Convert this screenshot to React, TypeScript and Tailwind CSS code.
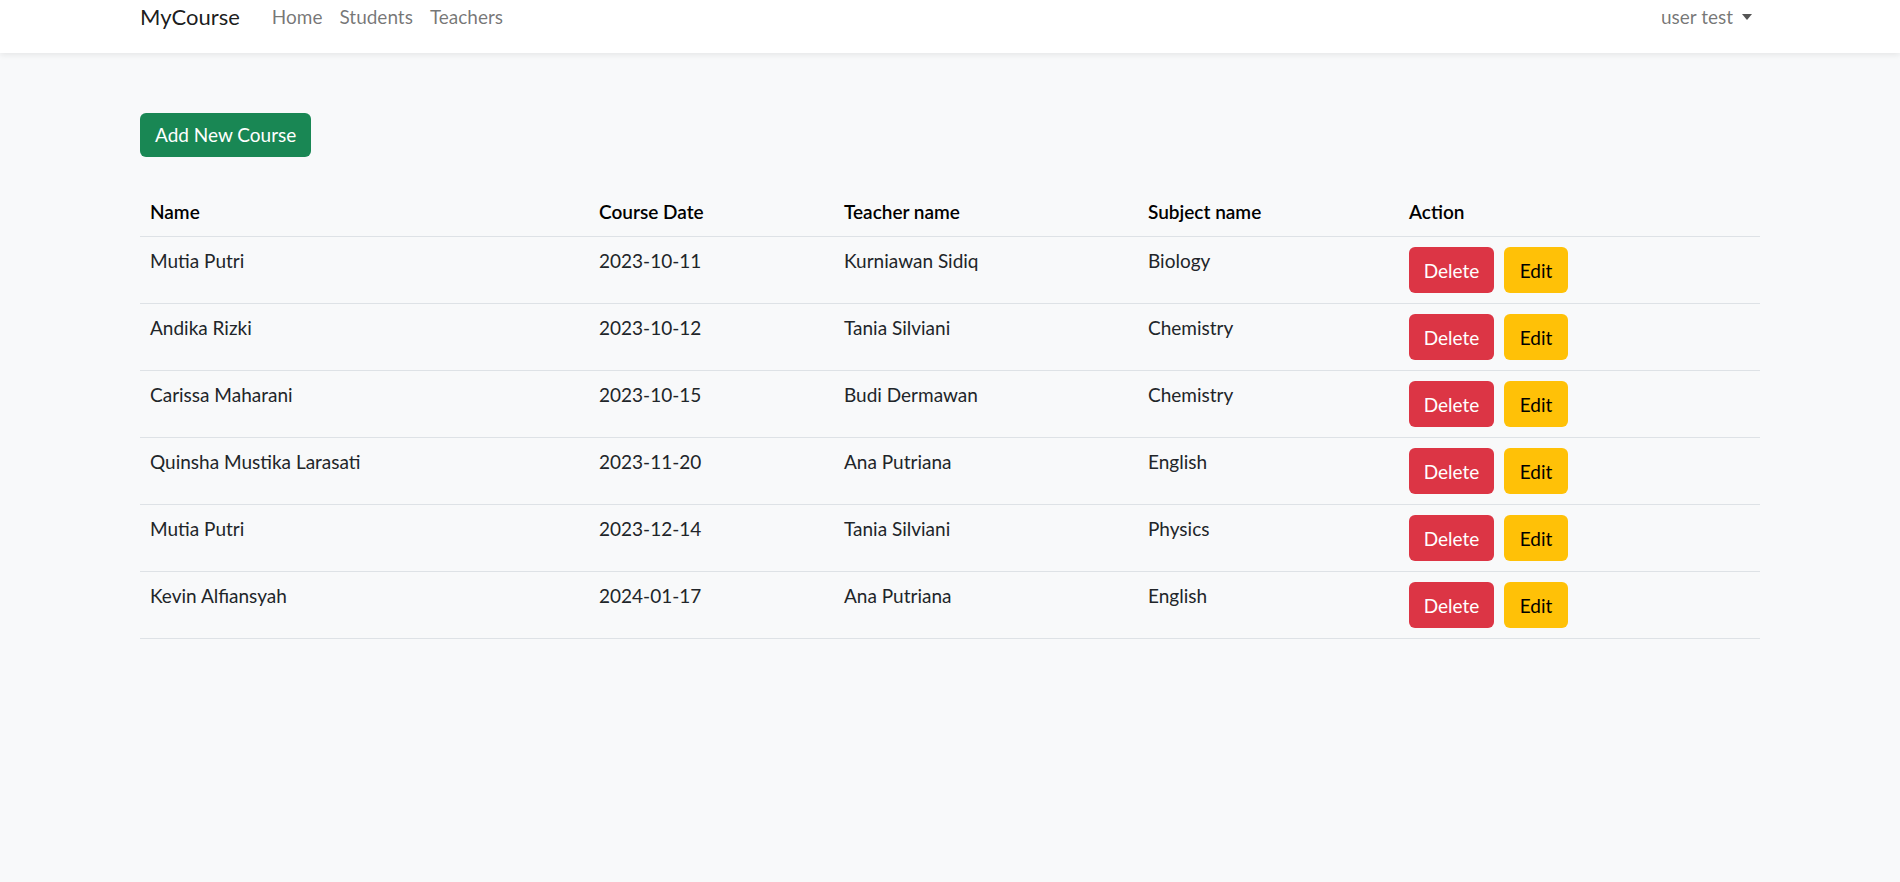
import React from "react";

interface Course {
  name: string;
  date: string;
  teacher: string;
  subject: string;
}

const courses: Course[] = [
  { name: "Mutia Putri", date: "2023-10-11", teacher: "Kurniawan Sidiq", subject: "Biology" },
  { name: "Andika Rizki", date: "2023-10-12", teacher: "Tania Silviani", subject: "Chemistry" },
  { name: "Carissa Maharani", date: "2023-10-15", teacher: "Budi Dermawan", subject: "Chemistry" },
  { name: "Quinsha Mustika Larasati", date: "2023-11-20", teacher: "Ana Putriana", subject: "English" },
  { name: "Mutia Putri", date: "2023-12-14", teacher: "Tania Silviani", subject: "Physics" },
  { name: "Kevin Alfiansyah", date: "2024-01-17", teacher: "Ana Putriana", subject: "English" },
];

export default function App() {
  return (
    <div
      className="min-h-[882px] bg-[#f8f9fa] text-[#212529] text-[19px]"
      style={{ fontFamily: "Lato, 'Open Sans', sans-serif" }}
    >
      {/* Navbar */}
      <nav className="h-[53px] bg-white shadow-[0_2px_6px_rgba(0,0,0,0.08)]">
        <div className="w-[1620px] mx-auto flex items-start justify-between pt-[2px]">
          <div className="flex items-center">
            <span className="text-[22px] leading-[30px] text-black/90 mr-[32px]">MyCourse</span>
            <div className="flex items-center gap-[17px] text-black/55 leading-[30px]">
              <a>Home</a>
              <a>Students</a>
              <a>Teachers</a>
            </div>
          </div>
          <div className="flex items-center text-black/55 leading-[30px] mr-[8px]">
            <span>user test</span>
            <span className="ml-[9px] w-0 h-0 border-l-[5px] border-r-[5px] border-t-[6px] border-l-transparent border-r-transparent border-t-[#555]" />
          </div>
        </div>
      </nav>

      {/* Content */}
      <main className="w-[1620px] mx-auto pt-[60px]">
        <button className="h-[44px] px-[15px] rounded-[6px] bg-[#198754] text-white leading-[28px]">
          Add New Course
        </button>

        <table className="mt-[30px] w-full table-fixed border-collapse">
          <thead>
            <tr className="border-b border-[#dee2e6]">
              <th className="w-[449px] text-left font-semibold text-black px-[10px] py-[10px] leading-[29px]">Name</th>
              <th className="w-[245px] text-left font-semibold text-black px-[10px] py-[10px] leading-[29px]">Course Date</th>
              <th className="w-[304px] text-left font-semibold text-black px-[10px] py-[10px] leading-[29px]">Teacher name</th>
              <th className="w-[261px] text-left font-semibold text-black px-[10px] py-[10px] leading-[29px]">Subject name</th>
              <th className="text-left font-semibold text-black px-[10px] py-[10px] leading-[29px]">Action</th>
            </tr>
          </thead>
          <tbody>
            {courses.map((c, i) => (
              <tr key={i} className="border-b border-[#dee2e6] align-top">
                <td className="px-[10px] py-[9px] leading-[29px]">{c.name}</td>
                <td className="px-[10px] py-[9px] leading-[29px]">{c.date}</td>
                <td className="px-[10px] py-[9px] leading-[29px]">{c.teacher}</td>
                <td className="px-[10px] py-[9px] leading-[29px]">{c.subject}</td>
                <td className="px-[10px] py-[10px]">
                  <div className="flex gap-[10px]">
                    <button className="h-[46px] w-[85px] rounded-[6px] bg-[#dc3545] text-white leading-[29px]">
                      Delete
                    </button>
                    <button className="h-[46px] w-[64px] rounded-[6px] bg-[#ffc107] text-black leading-[29px]">
                      Edit
                    </button>
                  </div>
                </td>
              </tr>
            ))}
          </tbody>
        </table>
      </main>
    </div>
  );
}
